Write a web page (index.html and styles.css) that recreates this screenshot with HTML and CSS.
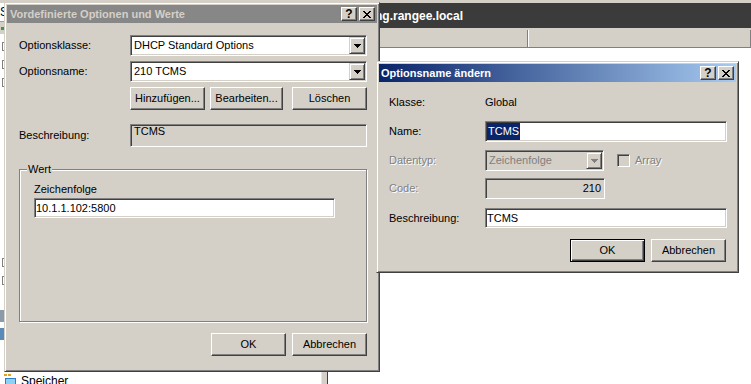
FILE: index.html
```html
<!DOCTYPE html>
<html lang="de">
<head>
<meta charset="utf-8">
<title>DHCP</title>
<link rel="stylesheet" href="styles.css">
</head>
<body>
<div class="app">
  <div class="app-top"></div>
  <div class="app-main">
    <div class="tree">
      <div class="tree-head">S</div>
      <div class="tree-tools"><span class="tool-dot"></span></div>
      <div class="tree-list">
        <div class="tree-row"><span class="exp"></span></div>
        <div class="tree-row"><span class="exp"></span></div>
        <div class="tree-row"><span class="exp"></span></div>
        <div class="tree-row"><span class="nexp"></span></div>
        <div class="tree-row"><span class="nexp"></span></div>
        <div class="tree-row"><span class="nexp"></span></div>
        <div class="tree-row"><span class="nexp"></span></div>
        <div class="tree-row"><span class="nexp"></span></div>
        <div class="tree-row"><span class="nexp"></span></div>
        <div class="tree-row"><span class="nexp"></span></div>
        <div class="tree-row"><span class="nexp"></span></div>
        <div class="tree-row"><span class="nexp"></span></div>
        <div class="tree-row"><span class="exp"></span></div>
        <div class="tree-row"><span class="exp"></span></div>
        <div class="tree-row"><span class="nexp"></span></div>
        <div class="tree-row"><span class="ico-a"></span></div>
        <div class="tree-row"><span class="ico-b"></span></div>
      </div>
      <div class="tree-last">
        <svg class="store-ico" width="14" height="14" viewBox="0 0 14 14" shape-rendering="crispEdges">
          <rect x="1" y="0" width="3" height="2" fill="#e0a020"/>
          <rect x="5" y="0" width="3" height="2" fill="#e0a020"/>
          <rect x="2" y="4" width="11" height="7" fill="#2a7fc8"/>
          <rect x="3" y="5" width="9" height="5" fill="#8fd0f5"/>
          <rect x="5" y="11" width="5" height="2" fill="#607080"/>
        </svg>
        <span>Speicher</span>
      </div>
    </div>
    <div class="splitter"></div>
    <div class="details">
      <div class="details-title">ng.rangee.local</div>
      <div class="details-sep"></div>
      <div class="col-head"><div class="col c1"></div><div class="col c2"></div></div>
      <div class="details-body"></div>
    </div>
  </div>
</div>

<div class="win win-1">
  <div class="titlebar tb-inactive">
    <span class="title-text">Vordefinierte Optionen und Werte</span>
    <span class="cap cap-first">?</span>
    <span class="cap"><svg width="8" height="7" viewBox="0 0 8 7" shape-rendering="crispEdges"><path d="M0 0h2v1h-2zM6 0h2v1h-2zM1 1h2v1h-2zM5 1h2v1h-2zM2 2h4v1h-4zM3 3h2v1h-2zM2 4h4v1h-4zM1 5h2v1h-2zM5 5h2v1h-2zM0 6h2v1h-2zM6 6h2v1h-2z" fill="#000"/></svg></span>
  </div>
  <div class="body1">
    <div class="frow">
      <span class="lbl1">Optionsklasse:</span>
      <div class="field combo"><span class="combo-text">DHCP Standard Options</span><span class="drop"><svg width="7" height="4" viewBox="0 0 7 4" shape-rendering="crispEdges"><path d="M0 0h7v1h-7zM1 1h5v1h-5zM2 2h3v1h-3zM3 3h1v1h-1z" fill="#000"/></svg></span></div>
    </div>
    <div class="frow gap5">
      <span class="lbl1">Optionsname:</span>
      <div class="field combo"><span class="combo-text">210 TCMS</span><span class="drop"><svg width="7" height="4" viewBox="0 0 7 4" shape-rendering="crispEdges"><path d="M0 0h7v1h-7zM1 1h5v1h-5zM2 2h3v1h-3zM3 3h1v1h-1z" fill="#000"/></svg></span></div>
    </div>
    <div class="brow1">
      <span class="btn b-add">Hinzufügen...</span>
      <span class="btn b-edit">Bearbeiten...</span>
      <span class="btn b-del">Löschen</span>
    </div>
    <div class="frow desc-row">
      <span class="lbl1">Beschreibung:</span>
      <div class="field ro-area">TCMS</div>
    </div>
    <div class="group">
      <span class="group-label">Wert</span>
      <span class="glbl">Zeichenfolge</span>
      <div class="field gfield">10.1.1.102:5800</div>
    </div>
    <div class="foot1">
      <span class="btn b-foot">OK</span>
      <span class="btn b-foot">Abbrechen</span>
    </div>
  </div>
</div>

<div class="win win-2">
  <div class="titlebar tb-active">
    <span class="title-text">Optionsname ändern</span>
    <span class="cap cap-first">?</span>
    <span class="cap"><svg width="8" height="7" viewBox="0 0 8 7" shape-rendering="crispEdges"><path d="M0 0h2v1h-2zM6 0h2v1h-2zM1 1h2v1h-2zM5 1h2v1h-2zM2 2h4v1h-4zM3 3h2v1h-2zM2 4h4v1h-4zM1 5h2v1h-2zM5 5h2v1h-2zM0 6h2v1h-2zM6 6h2v1h-2z" fill="#000"/></svg></span>
  </div>
  <div class="body2">
    <div class="r2 r-klasse"><span class="lbl2">Klasse:</span><span>Global</span></div>
    <div class="r2 r-name"><span class="lbl2">Name:</span><div class="field f-name"><span class="sel">TCMS</span></div></div>
    <div class="r2 r-typ">
      <span class="lbl2 dis">Datentyp:</span>
      <div class="field combo combo-dis"><span class="combo-text">Zeichenfolge</span><span class="drop"><svg width="7" height="4" viewBox="0 0 7 4" shape-rendering="crispEdges"><path d="M0 0h7v1h-7zM1 1h5v1h-5zM2 2h3v1h-3zM3 3h1v1h-1z" fill="#808080"/></svg></span></div>
      <span class="field chk"></span>
      <span class="dis chk-lbl">Array</span>
    </div>
    <div class="r2 r-code"><span class="lbl2 dis">Code:</span><div class="field f-code">210</div></div>
    <div class="r2 r-desc"><span class="lbl2">Beschreibung:</span><div class="field f-desc">TCMS</div></div>
    <div class="foot2">
      <span class="btn btn-default b-foot">OK</span>
      <span class="btn b-foot">Abbrechen</span>
    </div>
  </div>
</div>
</body>
</html>
```

FILE: styles.css
```css
html, body {
  margin: 0;
  padding: 0;
}
body {
  width: 751px;
  height: 384px;
  overflow: hidden;
  position: relative;
  background: #fff;
  font-family: "Liberation Sans", Arial, sans-serif;
  font-size: 11px;
  line-height: 13px;
  color: #000;
}

/* ---------- background application ---------- */
.app {
  display: flex;
  flex-direction: column;
  height: 384px;
}
.app-top {
  height: 3px;
  flex: none;
  background: #d4d0c8;
}
.app-main {
  flex: 1;
  display: flex;
  min-height: 0;
}
.tree {
  width: 321px;
  flex: none;
  display: flex;
  flex-direction: column;
  background: #fff;
  overflow: hidden;
}
.tree-head {
  height: 18px;
  line-height: 18px;
  flex: none;
  font-size: 12px;
}
.tree-tools {
  height: 13px;
  flex: none;
  background: #d4d0c8;
  border-top: 1px solid #a0a0a0;
  box-sizing: border-box;
  display: flex;
  align-items: center;
}
.tool-dot {
  width: 3px;
  height: 3px;
  margin-left: 1px;
  background: #3c9a3c;
}
.tree-list {
  flex: 1;
  min-height: 0;
  padding-top: 3px;
  overflow: hidden;
}
.tree-row {
  height: 18px;
  display: flex;
  align-items: center;
}
.exp {
  width: 9px;
  height: 9px;
  margin-left: 2px;
  box-sizing: border-box;
  border: 1px solid #808080;
}
.nexp {
  width: 9px;
  height: 9px;
  margin-left: 2px;
}
.ico-a, .ico-b {
  width: 7px;
  height: 12px;
  background: #8a9aa8;
}
.ico-b { background: #5a8ab8; }
.tree-last {
  height: 18px;
  flex: none;
  margin-bottom: -6px;
  display: flex;
  align-items: center;
  gap: 4px;
  font-size: 12px;
}
.store-ico { margin-left: 3px; }
.splitter {
  width: 5px;
  flex: none;
  background: #d4d0c8;
  border-left: 1px solid #e8e6e0;
  border-right: 1px solid #404040;
}
.details {
  flex: 1;
  display: flex;
  flex-direction: column;
}
.details-title {
  height: 25px;
  flex: none;
  background: #3b3b3b;
  color: #fff;
  font-weight: bold;
  font-size: 12px;
  line-height: 26px;
  padding-left: 47px;
  white-space: nowrap;
}
.details-sep {
  height: 2px;
  flex: none;
  background: #d4d0c8;
}
.col-head {
  height: 17px;
  flex: none;
  display: flex;
  background: #d4d0c8;
  border-bottom: 1px solid #808080;
}
.col {
  box-sizing: border-box;
  border-right: 1px solid #808080;
  box-shadow: inset 1px 0 #fff;
}
.c1 { width: 200px; }
.c2 { flex: 1; }
.details-body {
  flex: 1;
  background: #fff;
}

/* ---------- classic windows ---------- */
.win {
  position: absolute;
  box-sizing: border-box;
  background: #d4d0c8;
  border: 1px solid;
  border-color: #d4d0c8 #404040 #404040 #d4d0c8;
  box-shadow: inset 1px 1px #fff, inset -1px -1px #808080;
  padding: 2px;
  display: flex;
  flex-direction: column;
}
.win-1 { left: 4px; top: 2px; width: 376px; height: 370px; }
.win-2 { left: 376px; top: 61px; width: 363px; height: 212px; }

.titlebar {
  height: 18px;
  flex: none;
  display: flex;
  align-items: center;
  padding: 0 2px 0 3px;
  font-weight: bold;
  white-space: nowrap;
}
.tb-inactive {
  background: #878787;
  color: #d4d0c8;
}
.tb-active {
  background: linear-gradient(to right, #0a246a, #a6caf0);
  color: #fff;
  padding-left: 2px;
}
.cap {
  width: 16px;
  height: 14px;
  box-sizing: border-box;
  background: #d4d0c8;
  border: 1px solid;
  border-color: #fff #404040 #404040 #fff;
  box-shadow: inset -1px -1px #808080;
  display: flex;
  align-items: center;
  justify-content: center;
  color: #000;
  font-size: 12px;
  font-weight: bold;
  margin-left: 2px;
}
.cap-first { margin-left: auto; }

/* controls */
.field {
  box-sizing: border-box;
  background: #fff;
  border: 1px solid;
  border-color: #808080 #fff #fff #808080;
  box-shadow: inset 1px 1px #404040, inset -1px -1px #d4d0c8;
  display: flex;
  align-items: center;
  padding: 0 2px;
  white-space: nowrap;
}
.combo {
  padding: 1px;
  padding-left: 3px;
}
.combo-text { flex: 1; }
.drop {
  width: 16px;
  height: 17px;
  box-sizing: border-box;
  background: #d4d0c8;
  border: 1px solid;
  border-color: #d4d0c8 #404040 #404040 #d4d0c8;
  box-shadow: inset 1px 1px #fff, inset -1px -1px #808080;
  display: flex;
  align-items: center;
  justify-content: center;
}
.btn {
  box-sizing: border-box;
  height: 23px;
  background: #d4d0c8;
  border: 1px solid;
  border-color: #fff #404040 #404040 #fff;
  box-shadow: inset -1px -1px #808080;
  display: flex;
  align-items: center;
  justify-content: center;
  white-space: nowrap;
}
.btn-default {
  border: 1px solid #000;
  box-shadow: inset 1px 1px #fff, inset -1px -1px #404040, inset -2px -2px #808080;
}
.dis {
  color: #808080;
  text-shadow: 1px 1px #fff;
}

/* dialog 1 body */
.body1 {
  flex: 1;
  display: flex;
  flex-direction: column;
  padding: 12px 10px 0 12px;
}
.frow {
  height: 21px;
  display: flex;
  align-items: center;
  flex: none;
}
.frow .field { flex: 1; height: 21px; }
.gap5 { margin-top: 5px; }
.lbl1 {
  width: 111px;
  flex: none;
}
.brow1 {
  margin-top: 5px;
  margin-left: 111px;
  display: flex;
  flex: none;
}
.b-add { width: 75px; }
.b-edit { width: 73px; margin-left: 5px; }
.b-del { width: 75px; margin-left: auto; }
.desc-row {
  margin-top: 14px;
  height: 23px;
}
.frow .ro-area {
  height: 23px;
  background: #d4d0c8;
  align-items: flex-start;
  padding: 0 3px;
}
.group {
  margin-top: 22px;
  height: 153px;
  box-sizing: border-box;
  border: 1px solid #808080;
  box-shadow: inset 1px 1px #fff, 1px 1px #fff;
  display: flex;
  flex-direction: column;
  align-items: flex-start;
  flex: none;
}
.group-label {
  margin: -7px 0 0 7px;
  padding: 0 1px;
  background: #d4d0c8;
  line-height: 13px;
}
.glbl {
  margin: 7px 0 0 14px;
}
.gfield {
  margin: 2px 0 0 14px;
  width: 301px;
  height: 20px;
  padding-left: 1px;
}
.foot1 {
  margin-top: 11px;
  display: flex;
  justify-content: flex-end;
  gap: 6px;
}
.b-foot { width: 75px; }

/* dialog 2 body */
.body2 {
  flex: 1;
  display: flex;
  flex-direction: column;
  padding: 14px 9px 0 10px;
}
.r2 {
  display: flex;
  align-items: center;
  flex: none;
}
.lbl2 {
  width: 96px;
  flex: none;
}
.r-klasse { height: 13px; }
.r-name { margin-top: 12px; height: 21px; }
.r-typ { margin-top: 8px; height: 21px; }
.r-code { margin-top: 7px; height: 21px; }
.r-desc { margin-top: 9px; height: 20px; }
.f-name {
  flex: 1;
  height: 21px;
  padding-left: 1px;
}
.sel {
  background: #0a246a;
  color: #fff;
  line-height: 17px;
  padding: 0 1px;
}
.combo-dis {
  width: 119px;
  height: 21px;
  background: #d4d0c8;
  color: #808080;
}
.chk {
  width: 13px;
  height: 13px;
  padding: 0;
  margin-left: 13px;
  background: #d4d0c8;
}
.chk-lbl { margin-left: 5px; }
.f-code {
  width: 120px;
  height: 21px;
  background: #d4d0c8;
  justify-content: flex-end;
  padding-right: 3px;
}
.f-desc {
  flex: 1;
  height: 20px;
  padding-left: 1px;
}
.foot2 {
  margin-top: 11px;
  margin-right: 1px;
  display: flex;
  justify-content: flex-end;
  gap: 6px;
}
```
